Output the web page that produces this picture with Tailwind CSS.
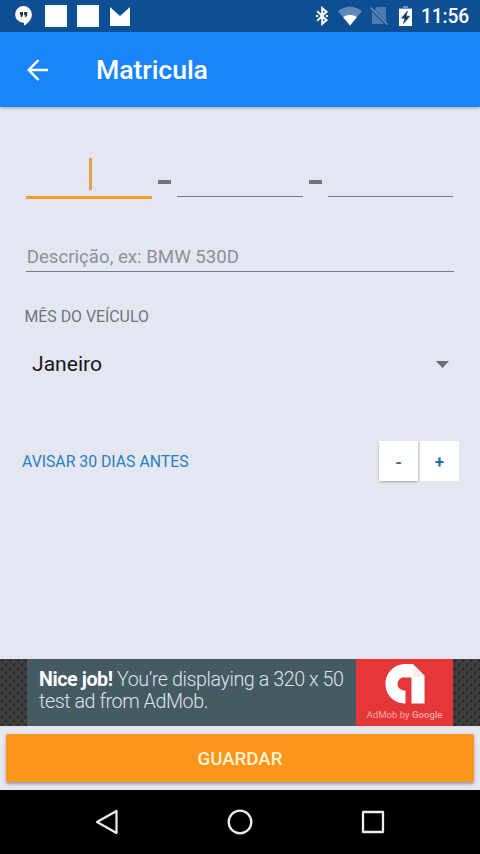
<!DOCTYPE html>
<html lang="pt">
<head>
<meta charset="utf-8">
<meta name="viewport" content="width=device-width">
<title>Matricula</title>
<script src="https://cdn.jsdelivr.net/npm/@tailwindcss/browser@4"></script>
</head>
<body class="w-[480px] h-[854px] overflow-hidden flex flex-col bg-[#e4e7f1] font-['Roboto',sans-serif]">
  <!-- Status bar -->
  <div class="h-8 shrink-0 bg-[#0e4f93] flex items-center justify-between pl-[15px] pr-[11px] text-white">
    <div class="flex items-center">
      <svg class="w-[17px] h-5" viewBox="0 0 17 20"><path fill="#fff" d="M8.5 0a8.4 8.4 0 0 1 8.4 8.4c0 4.600-3.600 8.800-7.900 11.100v-2.700h-.5A8.400 8.400 0 0 1 8.500 0z"/><path fill="#24303a" d="M5 6h3v3.300l-1.300 2H5.500l.8-2H5zM9.200 6h3v3.300l-1.300 2H9.700l.8-2H9.200z"/></svg>
      <div class="ml-[13px] w-[22px] h-[22px] bg-white"></div>
      <div class="ml-[10px] w-[22px] h-[22px] bg-white"></div>
      <svg class="ml-[11px] w-5 h-[19px]" viewBox="0 0 20 19"><path fill="#fff" d="M0 0l10 9L20 0v19H0z"/></svg>
    </div>
    <div class="flex items-center">
      <svg class="w-3 h-5" viewBox="0 0 12 20" fill="none" stroke="#fff" stroke-width="2"><path d="M1.200 5.200l9.300 9L6.200 17.800V2.200l4.300 3.600-9.300 9"/><path d="M0 10h2M10 10h2"/></svg>
      <svg class="ml-[10px] w-6 h-5" viewBox="0 0 24 20"><path fill="#5f8bb9" d="M0 5.200C7-.8 17-.8 24 5.200L12 19.500z"/><path fill="#fff" d="M5.200 11.300c4-3.500 9.600-3.500 13.600 0L12 19.500z"/></svg>
      <svg class="ml-[8px] w-[18px] h-5" viewBox="0 0 18 20"><path fill="#4d7cae" d="M7 1h9v14.500L4.500 4z"/><path fill="#4d7cae" d="M2 5.500L14.500 18H2z"/><path stroke="#6c94be" stroke-width="1.500" d="M.5 1.500l17 17"/></svg>
      <svg class="ml-[11px] w-[13px] h-5" viewBox="0 0 13 20"><path fill="#6c94be" d="M4 0h5v2h4v3H0V2h4z"/><path fill="#fff" d="M0 3h13v17H0z"/><path fill="#0e3a6a" stroke="#0e3a6a" stroke-width=".6" d="M8.500 5L2.500 12.200H6L4.500 17.500l6.300-7.300H7z"/></svg>
      <div class="ml-[9px] w-12 text-[19.300px] font-medium leading-8 tracking-[-0.2px] whitespace-nowrap pt-px">11:56</div>
    </div>
  </div>

  <!-- App bar -->
  <div class="relative h-[75px] shrink-0 bg-[#1a84fa] flex items-center pl-[27px] shadow-[0_1px_3px_rgba(60,70,110,0.45)]">
    <svg class="w-[21px] h-[22px]" viewBox="0 0 21 22" fill="none" stroke="#fff" stroke-width="2.500"><path d="M11.500 1L1.800 11l9.700 10M1.800 11H21"/></svg>
    <h1 class="ml-[48px] text-[26.700px] font-medium leading-8 tracking-[-0.100px] text-white pt-px">Matricula</h1>
  </div>

  <!-- Form -->
  <div class="flex flex-col grow px-[21px]">
    <div class="pt-[51px] px-[5px] flex">
      <div class="w-[126px] h-[41px] border-b-[3px] border-[#f79a2c] flex justify-center pl-[3px]"><div class="w-[3px] h-8 bg-[#e5a050]"></div></div>
      <div class="w-[25px] flex justify-center pt-[21.500px]"><div class="w-[13px] h-[4px] bg-[#70747c]"></div></div>
      <div class="w-[126px] h-[39px] flex flex-col justify-end"><div class="h-[1.500px] bg-[#777b86]"></div></div>
      <div class="w-[25px] flex justify-center pt-[21.500px]"><div class="w-[13px] h-[4px] bg-[#70747c]"></div></div>
      <div class="w-[125px] h-[39px] flex flex-col justify-end"><div class="h-[1.500px] bg-[#777b86]"></div></div>
    </div>
    <div class="mx-[5px] mt-[43px] h-[30px] border-b border-[#777b86] pl-[.7px] text-[18.670px] leading-[30px] text-[#8d9099]">Descrição, ex: BMW 530D</div>
    <div class="mt-[34px] pl-[3.500px] text-[15.850px] leading-[22px] text-[#6f727a]">MÊS DO VEÍCULO</div>
    <div class="mt-[22px] pl-[11px] pr-[10px] flex items-center justify-between text-[21.100px] leading-7 text-[#15171b]">
      <span>Janeiro</span>
      <svg class="w-[13px] h-[7px]" viewBox="0 0 13 7"><path fill="#696c73" d="M0 0h13L6.500 7z"/></svg>
    </div>
    <div class="mt-[63px] flex items-center">
      <span class="text-[15.800px] leading-5 text-[#287fc0] grow pl-px pt-px">AVISAR 30 DIAS ANTES</span>
      <div class="flex gap-[2px] text-[17px] font-bold text-center leading-[42px]">
        <div class="w-[39px] h-10 bg-white text-[#3d6480] shadow-[0_1px_2px_rgba(60,70,100,0.4)]">-</div>
        <div class="w-[39px] h-10 bg-white text-[#1c6cb5]">+</div>
      </div>
    </div>
  </div>

  <!-- Ad banner -->
  <div class="h-[67px] shrink-0 flex bg-[#373636]">
    <svg class="w-[27px] h-[67px] shrink-0"><defs><pattern id="mesh" width="8" height="8" patternUnits="userSpaceOnUse"><circle cx="2" cy="2" r="1.700" fill="#2d2c2c"/><circle cx="6" cy="6" r="1.700" fill="#2d2c2c"/></pattern></defs><rect width="27" height="67" fill="#403f3e"/><rect width="27" height="67" fill="url(#mesh)"/></svg>
    <div class="w-[329px] shrink-0 bg-[#455a63] pl-[12px] pt-[10px] text-[19.700px] leading-[22px] tracking-[-0.430px] font-light text-[#dce4e8] whitespace-nowrap"><b class="font-bold text-white">Nice job!</b> You’re displaying a 320 x 50<br>test ad from AdMob.</div>
    <div class="w-[97px] shrink-0 bg-[#e53638] flex flex-col items-center pt-[5px]">
      <svg class="w-10 h-10" viewBox="0 0 40 40"><path fill="#fff" d="M20.500 39.500C9 39.500.5 31 .5 20S9 0 20.500 0H28L39.500 11.500v28H26.500V13.500H20a6.300 6.300 0 0 0-7.500 6.500c0 4 3.500 6.500 8 6.500z"/><path fill="#f6f0f0" d="M28 1l11.500 11.500H28z"/></svg>
      <div class="mt-[5px] text-[9.600px] leading-3 text-[#f5aaaa] whitespace-nowrap">AdMob by <span class="font-medium">Google</span></div>
    </div>
    <svg class="w-[27px] h-[67px] shrink-0"><rect width="27" height="67" fill="#403f3e"/><rect width="27" height="67" fill="url(#mesh)"/></svg>
  </div>

  <!-- Save button -->
  <div class="h-[64px] shrink-0 px-[6px] pt-[8px]">
    <button class="block w-full h-[48px] rounded-[2px] bg-[#fd941b] pt-[2px] text-[18.670px] font-medium text-[#fff3d0] shadow-[0_2px_3px_rgba(60,60,90,0.45)]">GUARDAR</button>
  </div>

  <!-- Navigation bar -->
  <div class="h-[64px] shrink-0 bg-black flex items-center justify-between pl-[95px] pr-[95px]">
    <svg class="w-6 h-[26px]" viewBox="0 0 24 26" fill="none" stroke="#eee" stroke-width="2.200" stroke-linejoin="round"><path d="M2 13L21.500 2v22z"/></svg>
    <svg class="w-[26px] h-[26px]" viewBox="0 0 26 26" fill="none" stroke="#eee" stroke-width="2.300"><circle cx="13" cy="13" r="11.300"/></svg>
    <svg class="w-6 h-6" viewBox="0 0 24 24" fill="none" stroke="#eee" stroke-width="2.300" stroke-linejoin="round"><path d="M2 2h20v20H2z"/></svg>
  </div>
</body>
</html>
